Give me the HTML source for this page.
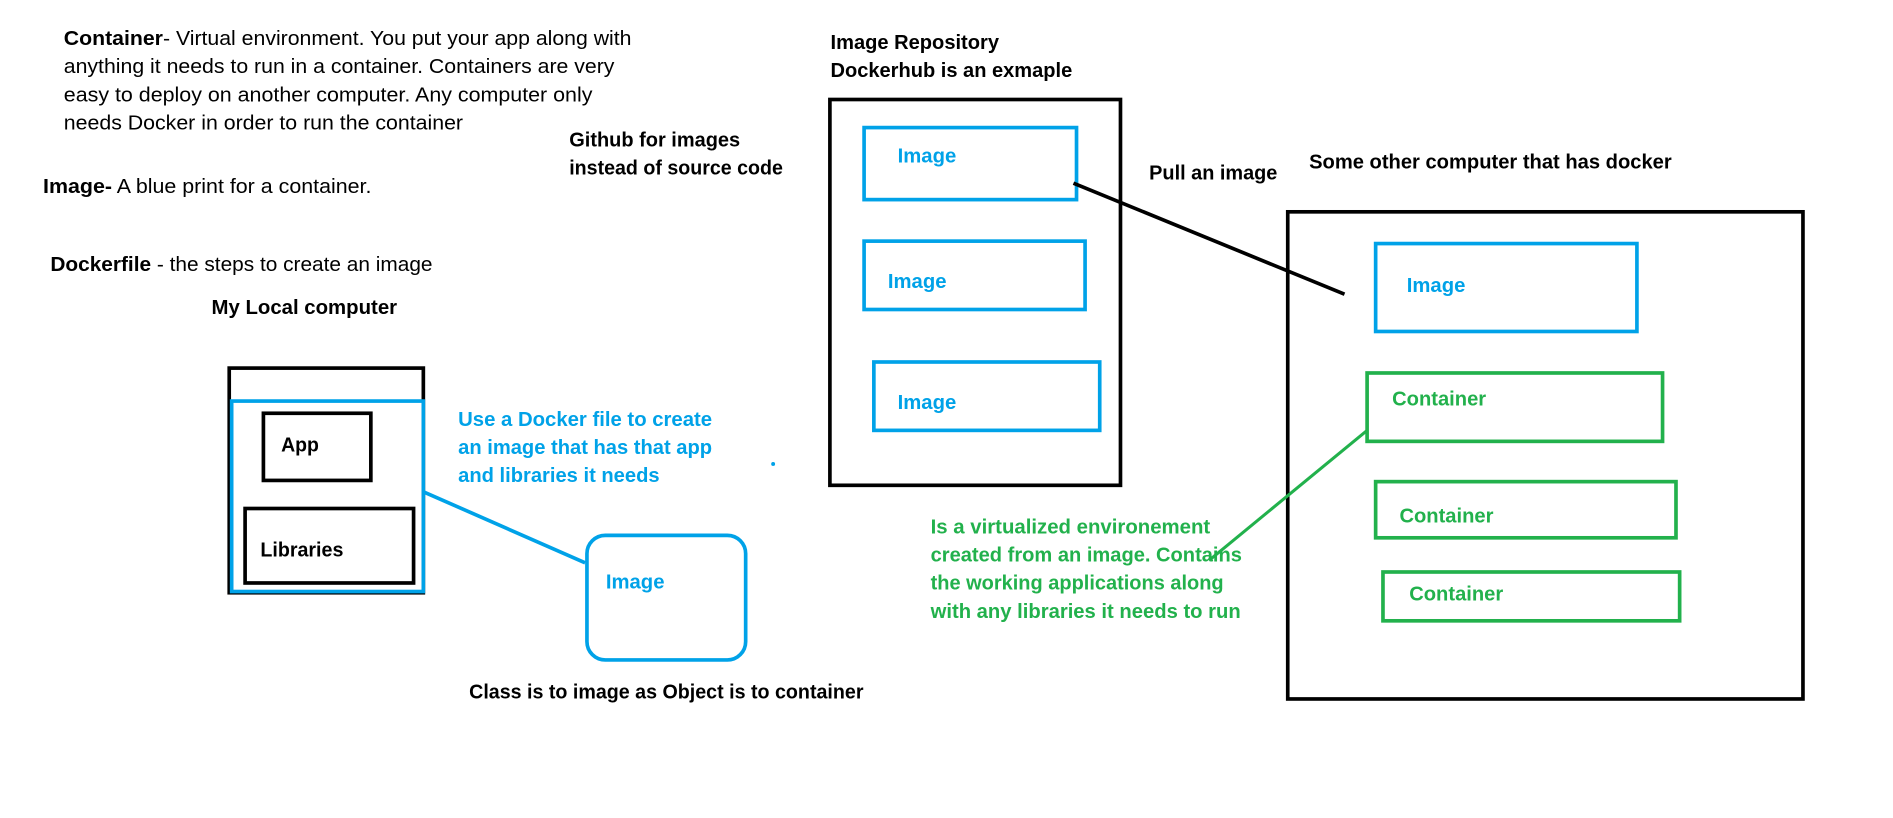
<!DOCTYPE html>
<html><head><meta charset="utf-8"><style>
html,body{margin:0;padding:0;background:#fff;width:1893px;height:818px;overflow:hidden}
svg{display:block}
text{font-family:"Liberation Sans",sans-serif;font-size:16.5px;fill:#000}
.b{font-weight:bold}
.bl{fill:#00a2e8}
.gr{fill:#22b14c}
</style></head><body>
<svg width="1893" height="818" viewBox="0 0 1550 670" xmlns="http://www.w3.org/2000/svg">
<rect width="1550" height="670" fill="#fff"/>
<g fill="none" stroke-linejoin="miter">
<rect x="679.5" y="81.5" width="238" height="316" stroke="#000" stroke-width="3"/>
<rect x="707.5" y="104.5" width="174" height="59" stroke="#00a2e8" stroke-width="3"/>
<rect x="707.5" y="197.5" width="181" height="56" stroke="#00a2e8" stroke-width="3"/>
<rect x="715.5" y="296.5" width="185" height="56" stroke="#00a2e8" stroke-width="3"/>
<rect x="1054.5" y="173.5" width="422" height="399" stroke="#000" stroke-width="3"/>
<rect x="1126.5" y="199.5" width="214" height="72" stroke="#00a2e8" stroke-width="3"/>
<rect x="1119.5" y="305.5" width="242" height="56" stroke="#22b14c" stroke-width="3"/>
<rect x="1126.5" y="394.5" width="246" height="46" stroke="#22b14c" stroke-width="3"/>
<rect x="1132.5" y="468.5" width="243" height="40" stroke="#22b14c" stroke-width="3"/>
<line x1="879" y1="150" x2="1101" y2="241" stroke="#000" stroke-width="3"/>
<line x1="1119" y1="353" x2="990" y2="459" stroke="#22b14c" stroke-width="2.5"/>
<rect x="187.5" y="301.5" width="159" height="184" stroke="#000" stroke-width="3"/>
<rect x="189.5" y="328.5" width="157" height="156" stroke="#00a2e8" stroke-width="3"/>
<rect x="215.5" y="338.5" width="88" height="55" stroke="#000" stroke-width="3"/>
<rect x="200.5" y="416.5" width="138" height="61" stroke="#000" stroke-width="3"/>
<line x1="347" y1="403" x2="479" y2="461" stroke="#00a2e8" stroke-width="3"/>
<rect x="480.5" y="438.5" width="130" height="102" rx="15" stroke="#00a2e8" stroke-width="3"/>
</g>
<circle cx="633" cy="380" r="1.6" fill="#00a2e8"/>

<text x="52" y="37" textLength="465" lengthAdjust="spacingAndGlyphs"><tspan class="b">Container</tspan>- Virtual environment. You put your app along with</text>
<text x="52" y="60" textLength="451" lengthAdjust="spacingAndGlyphs">anything it needs to run in a container. Containers are very</text>
<text x="52" y="83" textLength="433" lengthAdjust="spacingAndGlyphs">easy to deploy on another computer. Any computer only</text>
<text x="52" y="106" textLength="327" lengthAdjust="spacingAndGlyphs">needs Docker in order to run the container</text>
<text x="35" y="158" textLength="269" lengthAdjust="spacingAndGlyphs"><tspan class="b">Image-</tspan> A blue print for a container.</text>
<text x="41" y="222" textLength="313" lengthAdjust="spacingAndGlyphs"><tspan class="b">Dockerfile</tspan> - the steps to create an image</text>
<text x="173" y="257" class="b" textLength="152" lengthAdjust="spacingAndGlyphs">My Local computer</text>
<text x="466" y="120" class="b" textLength="140" lengthAdjust="spacingAndGlyphs">Github for images</text>
<text x="466" y="143" class="b" textLength="175" lengthAdjust="spacingAndGlyphs">instead of source code</text>
<text x="680" y="40" class="b" textLength="138" lengthAdjust="spacingAndGlyphs">Image Repository</text>
<text x="680" y="63" class="b" textLength="198" lengthAdjust="spacingAndGlyphs">Dockerhub is an exmaple</text>
<text x="735" y="133" class="bl b" textLength="48" lengthAdjust="spacingAndGlyphs">Image</text>
<text x="727" y="236" class="bl b" textLength="48" lengthAdjust="spacingAndGlyphs">Image</text>
<text x="735" y="335" class="bl b" textLength="48" lengthAdjust="spacingAndGlyphs">Image</text>
<text x="941" y="147" class="b" textLength="105" lengthAdjust="spacingAndGlyphs">Pull an image</text>
<text x="1072" y="138" class="b" textLength="297" lengthAdjust="spacingAndGlyphs">Some other computer that has docker</text>
<text x="1152" y="239" class="bl b" textLength="48" lengthAdjust="spacingAndGlyphs">Image</text>
<text x="1140" y="332" class="gr b" textLength="77" lengthAdjust="spacingAndGlyphs">Container</text>
<text x="1146" y="428" class="gr b" textLength="77" lengthAdjust="spacingAndGlyphs">Container</text>
<text x="1154" y="492" class="gr b" textLength="77" lengthAdjust="spacingAndGlyphs">Container</text>
<text x="762" y="437" class="gr b" textLength="229" lengthAdjust="spacingAndGlyphs">Is a virtualized environement</text>
<text x="762" y="460" class="gr b" textLength="255" lengthAdjust="spacingAndGlyphs">created from an image. Contains</text>
<text x="762" y="483" class="gr b" textLength="240" lengthAdjust="spacingAndGlyphs">the working applications along</text>
<text x="762" y="506" class="gr b" textLength="254" lengthAdjust="spacingAndGlyphs">with any libraries it needs to run</text>
<text x="230" y="370" class="b" textLength="31" lengthAdjust="spacingAndGlyphs">App</text>
<text x="213" y="456" class="b" textLength="68" lengthAdjust="spacingAndGlyphs">Libraries</text>
<text x="375" y="349" class="bl b" textLength="208" lengthAdjust="spacingAndGlyphs">Use a Docker file to create</text>
<text x="375" y="372" class="bl b" textLength="208" lengthAdjust="spacingAndGlyphs">an image that has that app</text>
<text x="375" y="395" class="bl b" textLength="165" lengthAdjust="spacingAndGlyphs">and libraries it needs</text>
<text x="496" y="482" class="bl b" textLength="48" lengthAdjust="spacingAndGlyphs">Image</text>
<text x="384" y="572" class="b" textLength="323" lengthAdjust="spacingAndGlyphs">Class is to image as Object is to container</text>
</svg>
</body></html>
